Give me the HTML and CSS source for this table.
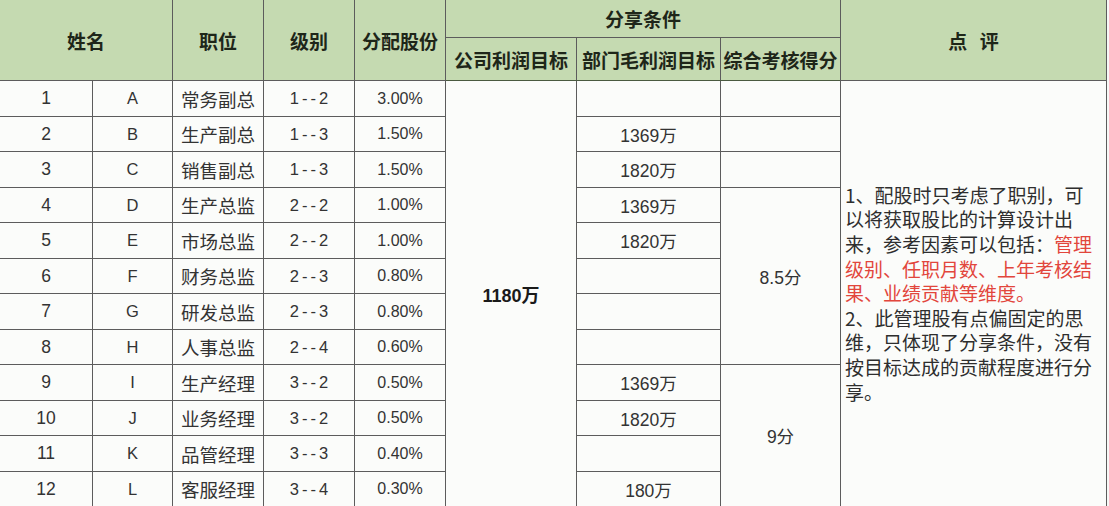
FILE: index.html
```html
<!DOCTYPE html>
<html lang="zh-CN">
<head>
<meta charset="utf-8">
<title>管理股分配表</title>
<link rel="stylesheet" href="styles.css">
</head>
<body>
<div class="sheet">
<table class="grid">
  <colgroup>
    <col class="c-no"><col class="c-name"><col class="c-pos"><col class="c-lvl"><col class="c-pct">
    <col class="c-co"><col class="c-dept"><col class="c-score"><col class="c-note">
  </colgroup>
  <thead>
    <tr class="h1">
      <th colspan="2" rowspan="2">姓名</th>
      <th rowspan="2">职位</th>
      <th rowspan="2">级别</th>
      <th rowspan="2">分配股份</th>
      <th colspan="3">分享条件</th>
      <th rowspan="2" class="note-h">点 评</th>
    </tr>
    <tr class="h2">
      <th>公司利润目标</th>
      <th>部门毛利润目标</th>
      <th>综合考核得分</th>
    </tr>
  </thead>
  <tbody>
    <tr class="ra">
      <td class="no">1</td><td class="nm">A</td><td class="cn">常务副总</td><td class="lv">1--2</td><td class="pc">3.00%</td>
      <td rowspan="12" class="big">1180万</td>
      <td class="val"></td><td class="val"></td>
      <td rowspan="12" class="note">1、配股时只考虑了职别，可<br>以将获取股比的计算设计出<br>来，参考因素可以包括：<span class="red">管理<br>级别、任职月数、上年考核结<br>果、业绩贡献等维度。</span><br>2、此管理股有点偏固定的思<br>维，只体现了分享条件，没有<br>按目标达成的贡献程度进行分<br>享。</td>
    </tr>
    <tr class="rb">
      <td class="no">2</td><td class="nm">B</td><td class="cn">生产副总</td><td class="lv">1--3</td><td class="pc">1.50%</td>
      <td class="val">1369万</td><td class="val"></td>
    </tr>
    <tr class="ra">
      <td class="no">3</td><td class="nm">C</td><td class="cn">销售副总</td><td class="lv">1--3</td><td class="pc">1.50%</td>
      <td class="val">1820万</td><td class="val"></td>
    </tr>
    <tr class="rb">
      <td class="no">4</td><td class="nm">D</td><td class="cn">生产总监</td><td class="lv">2--2</td><td class="pc">1.00%</td>
      <td class="val">1369万</td><td rowspan="5" class="val">8.5分</td>
    </tr>
    <tr class="ra">
      <td class="no">5</td><td class="nm">E</td><td class="cn">市场总监</td><td class="lv">2--2</td><td class="pc">1.00%</td>
      <td class="val">1820万</td>
    </tr>
    <tr class="rb">
      <td class="no">6</td><td class="nm">F</td><td class="cn">财务总监</td><td class="lv">2--3</td><td class="pc">0.80%</td>
      <td class="val"></td>
    </tr>
    <tr class="ra">
      <td class="no">7</td><td class="nm">G</td><td class="cn">研发总监</td><td class="lv">2--3</td><td class="pc">0.80%</td>
      <td class="val"></td>
    </tr>
    <tr class="rb">
      <td class="no">8</td><td class="nm">H</td><td class="cn">人事总监</td><td class="lv">2--4</td><td class="pc">0.60%</td>
      <td class="val"></td>
    </tr>
    <tr class="ra">
      <td class="no">9</td><td class="nm">I</td><td class="cn">生产经理</td><td class="lv">3--2</td><td class="pc">0.50%</td>
      <td class="val">1369万</td><td rowspan="4" class="val">9分</td>
    </tr>
    <tr class="rb">
      <td class="no">10</td><td class="nm">J</td><td class="cn">业务经理</td><td class="lv">3--2</td><td class="pc">0.50%</td>
      <td class="val">1820万</td>
    </tr>
    <tr class="ra">
      <td class="no">11</td><td class="nm">K</td><td class="cn">品管经理</td><td class="lv">3--3</td><td class="pc">0.40%</td>
      <td class="val"></td>
    </tr>
    <tr class="rb">
      <td class="no">12</td><td class="nm">L</td><td class="cn">客服经理</td><td class="lv">3--4</td><td class="pc">0.30%</td>
      <td class="val">180万</td>
    </tr>
  </tbody>
</table>
</div>
</body>
</html>
```
FILE: styles.css
```css
html, body {
  margin: 0;
  padding: 0;
  background: #f7f8f6;
}
.sheet {
  width: 1109px;
  height: 506px;
  overflow: hidden;
}
.grid {
  border-collapse: collapse;
  table-layout: fixed;
  width: 1107px;
  margin: -1px 0 0 -1px;
  background: #fbfcfa;
  color: #333;
  font-family: "Liberation Sans", "Noto Sans CJK SC", sans-serif;
}
.c-no { width: 93px; }
.c-name { width: 80px; }
.c-pos { width: 91px; }
.c-lvl { width: 91px; }
.c-pct { width: 91px; }
.c-co { width: 131px; }
.c-dept { width: 144px; }
.c-score { width: 120px; }
.c-note { width: 266px; }

.grid th, .grid td {
  border: 1px solid #5c5c5c;
  padding: 0;
  text-align: center;
  vertical-align: middle;
  white-space: nowrap;
  overflow: hidden;
}
.grid th {
  background: #c5dab1;
  color: #1e2619;
  font-family: "Noto Sans CJK SC", sans-serif;
  font-weight: bold;
  font-size: 19px;
}
.h1 { height: 38px; }
.h2 { height: 43px; }
.grid thead tr.h2 th { border-bottom-color: #4a5a40; }
.grid .note-h { letter-spacing: 4px; padding-left: 4px; }
.ra { height: 36px; }
.rb { height: 35px; }

.grid .no { font-size: 17.5px; }
.grid .nm { font-size: 16.5px; }
.grid .cn { font-family: "Noto Sans CJK SC", sans-serif; font-size: 18.5px; }
.grid .lv { font-size: 16.5px; letter-spacing: 3px; padding-left: 3px; }
.grid .pc { font-size: 16px; }
.grid .val { font-size: 17.5px; }
.grid .big { font-size: 18px; font-weight: bold; color: #1a1a1a; }
.grid .note {
  text-align: left;
  font-family: "Noto Sans CJK SC", sans-serif;
  font-size: 19px;
  line-height: 24.6px;
  padding-left: 4px;
  color: #2e2e2e;
}
.red { color: #e2463c; }
```
